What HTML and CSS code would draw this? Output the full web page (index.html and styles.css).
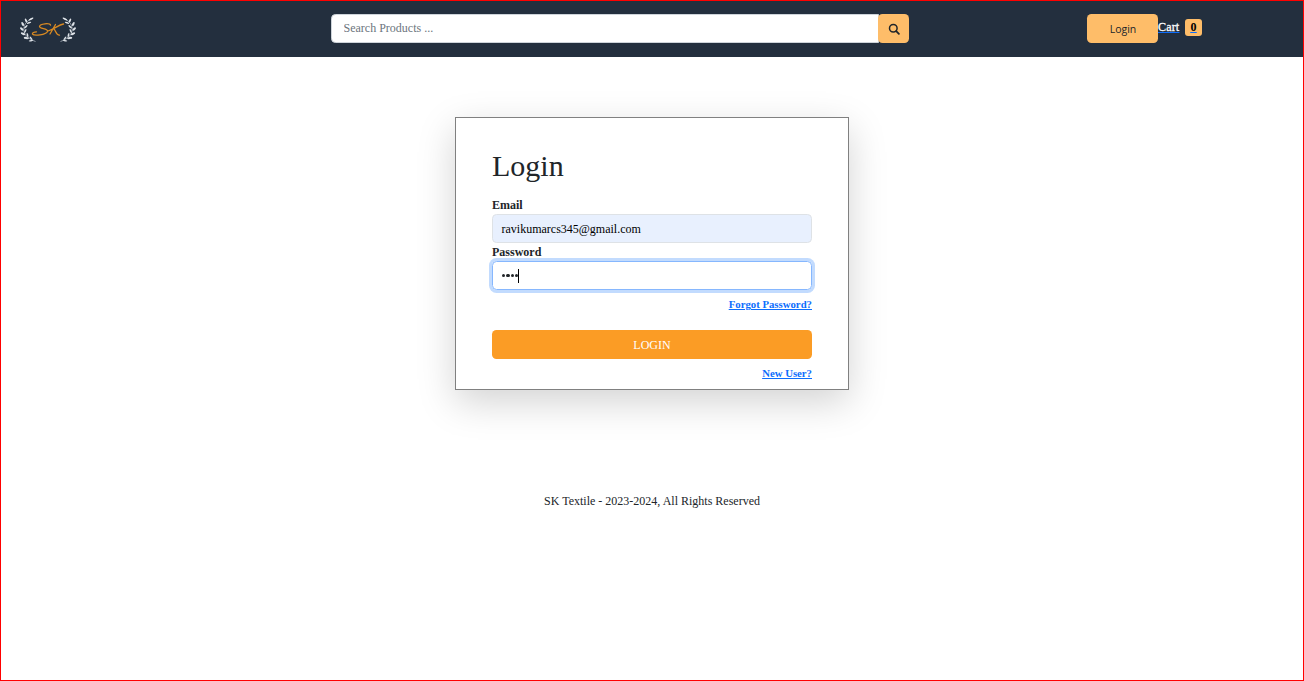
FILE: index.html
```html
<!DOCTYPE html>
<html lang="en">
<head>
<meta charset="utf-8">
<title>SK Textile - Login</title>
<link rel="stylesheet" href="styles.css">
</head>
<body>
<div class="app">
  <header class="navbar">
    <a class="brand" aria-label="SK">
      <svg width="58" height="28" viewBox="0 0 58 28" fill="none">
        <g id="laurel">
          <path d="M12.500 3C7 5 4 10 5 15S10 23 16.500 25.500" stroke="#a9b2bc" stroke-width=".8"/>
          <g fill="#dde2e7">
            <ellipse cx="12" cy="3" rx="2.700" ry=".9" transform="rotate(-28 12 3)"/>
            <ellipse cx="7" cy="4.500" rx="2.100" ry=".9" transform="rotate(65 7 4.500)"/>
            <ellipse cx="10" cy="6.800" rx="2.300" ry=".8" transform="rotate(-20 10 6.800)"/>
            <ellipse cx="3.700" cy="8" rx="2.200" ry="1.100" transform="rotate(65 3.700 8)"/>
            <ellipse cx="6.800" cy="10.800" rx="2.300" ry=".8" transform="rotate(-42 6.800 10.800)"/>
            <ellipse cx="2.800" cy="13" rx="2.200" ry="1.100" transform="rotate(45 2.800 13)"/>
            <ellipse cx="6.300" cy="15" rx="2.100" ry=".8" transform="rotate(-65 6.300 15)"/>
            <ellipse cx="4" cy="17.800" rx="2.400" ry="1.100" transform="rotate(25 4 17.800)"/>
            <ellipse cx="8.500" cy="19" rx="2.100" ry=".8" transform="rotate(75 8.500 19)"/>
            <ellipse cx="7.300" cy="22" rx="2.600" ry="1.100" transform="rotate(5 7.300 22)"/>
            <ellipse cx="12" cy="22.200" rx="2" ry=".7" transform="rotate(50 12 22.200)"/>
            <ellipse cx="12" cy="24.700" rx="2.300" ry=".7" transform="rotate(-10 12 24.700)"/>
          </g>
        </g>
        <use href="#laurel" transform="translate(58 0) scale(-1 1)"/>
        <g stroke="#d98a22" stroke-width="1.300" stroke-linecap="round">
          <path d="M31.500 9.200C31 6.800 21 7.500 20.500 10.500C20.500 13 29.500 12.500 28.500 15.500C27 19 15 20 13.500 18C13 16.800 15 15.800 17.500 15.800"/>
          <path d="M36.500 8.500L31 18M44.500 8C39 9 36 13 29 15M34.500 12.500C37 14 36.500 19 40.500 19.200"/>
        </g>
      </svg>
    </a>
    <form class="search">
      <input class="search-input" type="text" placeholder="Search Products ...">
      <button class="search-button" type="button" aria-label="Search">
        <svg width="12" height="12" viewBox="0 0 12 12" fill="none" stroke="#212529">
          <circle cx="5.300" cy="5.200" r="3.800" stroke-width="1.500"/>
          <path d="M8.200 8.100L10.900 10.800" stroke-width="1.800" stroke-linecap="round"/>
        </svg>
      </button>
    </form>
    <div class="actions">
      <button class="nav-login" type="button">Login</button>
      <a class="cart" href="#"><span class="cart-label">Cart</span><span class="cart-count">0</span></a>
    </div>
  </header>
  <main class="content">
    <form class="card">
      <h1 class="title">Login</h1>
      <label class="label">Email</label>
      <div class="field filled">ravikumarcs345@gmail.com</div>
      <label class="label">Password</label>
      <div class="field focused"><span class="dots"><i></i><i></i><i></i><i></i></span><span class="caret"></span></div>
      <a class="link" href="#">Forgot Password?</a>
      <button class="submit" type="button">LOGIN</button>
      <a class="link" href="#">New User?</a>
    </form>
  </main>
  <footer class="footer">SK Textile - 2023-2024, All Rights Reserved</footer>
</div>
</body>
</html>
```
FILE: styles.css
```css
* { box-sizing: border-box; }

body {
  margin: 0;
  font: 12px/18px "Liberation Serif", "Times New Roman", serif;
  color: #212529;
  background: #fff;
}

button, input { font: inherit; color: inherit; }

.app {
  height: 681px;
  border: 1px solid red;
  overflow: hidden;
}

.navbar {
  display: grid;
  grid-template-columns: 330px 578px 1fr;
  height: 56px;
  padding-top: 13px;
  background: #232f3e;
}

.brand { display: block; padding: 2px 0 0 18px; }
.brand svg { display: block; }

.search { display: flex; height: 29px; }

.search-input {
  width: 548px;
  padding: 0 11.500px 2px;
  border: 1px solid #ced4da;
  border-radius: 4.500px 0 0 4.500px;
  background: #fff;
}
.search-input::placeholder { color: #6c757d; opacity: 1; }

.search-button {
  display: flex;
  align-items: center;
  justify-content: center;
  width: 31px;
  margin-left: -1px;
  padding: 1px 0 0;
  border: 0;
  border-radius: 4.500px;
  background: #febd69;
}
.search-button svg { display: block; }

.actions { display: flex; padding-left: 178px; }

.nav-login {
  width: 71px;
  height: 29px;
  padding: 1px 0 0 1px;
  border: 0;
  border-radius: 4.500px;
  background: #febd69;
  font: 10.500px "Open Sans", sans-serif;
}

.cart {
  display: flex;
  height: 26px;
  align-items: center;
  font-weight: 700;
  color: #0d6efd;
}
.cart-label {
  width: 21px;
  color: #fff;
  font-weight: 400;
  letter-spacing: .15px;
  -webkit-text-stroke: .3px #fff;
}
.cart-label, .cart-count { text-decoration: underline #0d6efd; }
.cart-count {
  width: 17px;
  height: 17px;
  margin-left: 6px;
  border-radius: 3px;
  background: #febd69;
  color: #000;
  line-height: 17px;
  text-align: center;
}

.content { display: flex; justify-content: center; padding-top: 60px; }

.card {
  display: flex;
  flex-direction: column;
  width: 394px;
  height: 273px;
  padding: 30px 36px 0;
  border: 1px solid gray;
  background: #fff;
  box-shadow: 0 12px 36px rgba(0, 0, 0, .175);
}

.title { margin: 0 0 12px; font-size: 30px; font-weight: 400; line-height: 36px; }

.label { height: 18px; font-weight: 700; }

.field {
  display: flex;
  align-items: center;
  height: 29px;
  padding: 0 9px;
  border: 1px solid #dee2e6;
  border-radius: 4.500px;
}
.filled { padding-left: 8.500px; background: #e8f0fe; color: #000; }
.focused { border-color: #86b7fe; box-shadow: 0 0 0 3px #c2dbfe; }

.dots { display: flex; gap: 1.200px; }
.dots i { width: 3.200px; height: 3.200px; border-radius: 50%; background: #212529; }
.caret { width: 1px; height: 14px; background: #000; }

.link {
  align-self: flex-end;
  padding-top: 7px;
  color: #0d6efd;
  font-size: 10.750px;
  font-weight: 700;
  line-height: 15px;
}

.submit {
  height: 29px;
  margin: 18px 0 0;
  padding: 0;
  border: 0;
  border-radius: 4.500px;
  background: #fb9c25;
  color: #fff;
}

.footer { padding-top: 102px; text-align: center; }
```
